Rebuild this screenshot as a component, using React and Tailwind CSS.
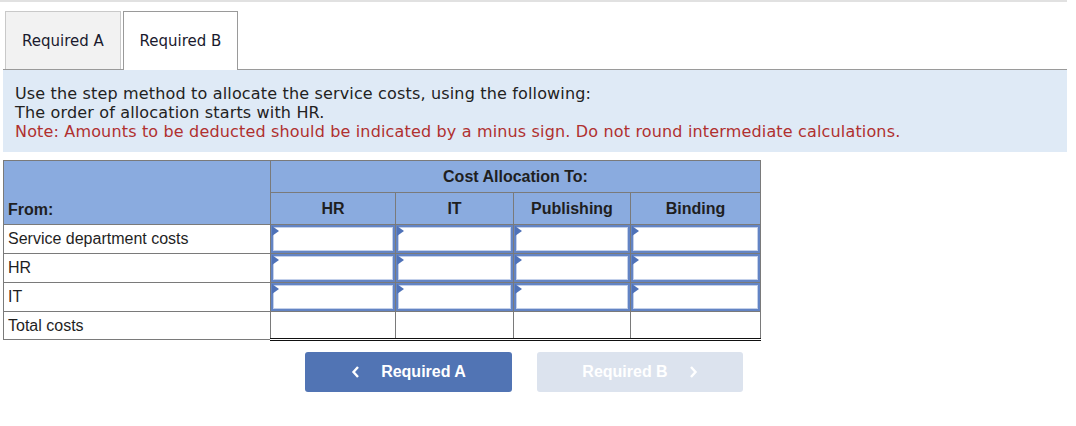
import React from 'react';

const cols = ['HR', 'IT', 'Publishing', 'Binding'];
const colWidths = ['w-[125px]', 'w-[118px]', 'w-[117px]', 'w-[130px]'];
const inputRows = ['Service department costs', 'HR', 'IT'];

const InputCell = () => (
  <td className="p-0 border border-[#7a7a7a] h-[28px]">
    <div className="relative h-[28px] bg-[#6384c4] p-[2px]">
      <div className="h-full bg-white border border-[#c3d0ea]" />
      <span className="absolute left-[1px] top-[1px] w-0 h-0 border-y-[5px] border-y-transparent border-l-[7px] border-l-[#4f72b8]" />
    </div>
  </td>
);

export default function App() {
  return (
    <div className="w-[1076px] h-[426px] bg-white" style={{ fontFamily: '"DejaVu Sans", Verdana, sans-serif' }}>
      <div className="h-[2px] w-[1067px] bg-[#e1e1e1]" />

      {/* tabs */}
      <div className="mt-[9px] ml-[3px] w-[1064px] pl-[2px] flex gap-[2px] border-b border-[#9a9a9a]">
        <div className="w-[116px] h-[58px] pt-[2px] flex items-center justify-center bg-[#f2f2f2] border border-b-0 border-[#c9c9c9] text-[15px] text-[#1a1a2e]">
          Required A
        </div>
        <div className="relative -mb-px w-[115px] h-[59px] pt-[1px] flex items-center justify-center bg-white border border-b-0 border-[#9a9a9a] text-[15px] text-[#1a1a2e]">
          Required B
        </div>
      </div>

      {/* instructions */}
      <div className="ml-[3px] w-[1064px] h-[82px] bg-[#dfeaf6] pl-[12px] pt-[14px] text-[16px] leading-[19px] tracking-[0.16px] text-[#222]">
        <p>Use the step method to allocate the service costs, using the following:</p>
        <p>The order of allocation starts with HR.</p>
        <p className="text-[#b0302f]">Note: Amounts to be deducted should be indicated by a minus sign. Do not round intermediate calculations.</p>
      </div>

      {/* table */}
      <table className="mt-[8px] ml-[3px] border-collapse text-[#1f1f1f]" style={{ fontFamily: '"Liberation Sans", Arial, sans-serif' }}>
        <thead>
          <tr className="bg-[#8aabdf]">
            <th rowSpan={2} className="w-[267px] border border-[#7a7a7a] text-left align-bottom font-bold text-[16px] pl-[4px] pb-[2px]">From:</th>
            <th colSpan={4} className="h-[32px] border border-[#7a7a7a] font-bold text-[16px]">Cost Allocation To:</th>
          </tr>
          <tr className="bg-[#8aabdf]">
            {cols.map((c, i) => (
              <th key={c} className={`${colWidths[i]} h-[32px] border border-[#7a7a7a] font-bold text-[16px]`}>{c}</th>
            ))}
          </tr>
        </thead>
        <tbody>
          {inputRows.map((r) => (
            <tr key={r}>
              <td className="border border-[#7a7a7a] text-[16px] pl-[4px] h-[28px]">{r}</td>
              {cols.map((c) => <InputCell key={c} />)}
            </tr>
          ))}
          <tr>
            <td className="border border-[#7a7a7a] text-[16px] pl-[4px] h-[28px]">Total costs</td>
            {cols.map((c) => (
              <td key={c} className="border border-[#7a7a7a] border-b-[3px] border-b-[#111] border-double h-[28px]" />
            ))}
          </tr>
        </tbody>
      </table>

      {/* nav buttons */}
      <div className="mt-[11px] ml-[305px] flex gap-[25px]" style={{ fontFamily: '"Liberation Sans", Arial, sans-serif' }}>
        <button className="w-[207px] h-[40px] rounded-[3px] bg-[#5174b4] text-white font-bold text-[16px] flex items-center justify-center gap-[20px]">
          <svg width="10" height="14" viewBox="0 0 10 14"><path d="M7 2 L2.5 7 L7 12" stroke="white" strokeWidth="2.4" fill="none" /></svg>
          Required A
        </button>
        <button className="w-[206px] h-[40px] rounded-[3px] bg-[#dce3ee] text-white font-bold text-[16px] flex items-center justify-center gap-[20px]">
          Required B
          <svg width="10" height="14" viewBox="0 0 10 14"><path d="M3 2 L7.5 7 L3 12" stroke="white" strokeWidth="2.4" fill="none" /></svg>
        </button>
      </div>
    </div>
  );
}
